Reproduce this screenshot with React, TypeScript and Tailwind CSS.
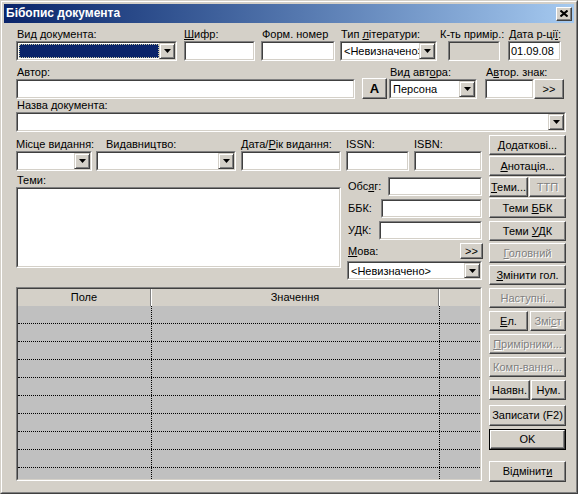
import React from "react";

type Kids = { children?: React.ReactNode; className?: string };

function U({ children }: Kids) {
  return <span className="underline underline-offset-[1px]">{children}</span>;
}

function Label({ children, className = "" }: Kids) {
  return <div className={`h-[13px] whitespace-nowrap ${className}`}>{children}</div>;
}

function Field({
  children,
  className = "",
  disabled,
}: Kids & { disabled?: boolean }) {
  return (
    <div
      className={`border border-t-[#808080] border-l-[#808080] border-r-white border-b-white ${className}`}
    >
      <div
        className={`flex h-full w-full items-center overflow-hidden border border-t-[#404040] border-l-[#404040] border-r-[#d4d0c8] border-b-[#d4d0c8] ${
          disabled ? "bg-[#d4d0c8]" : "bg-white"
        }`}
      >
        {children}
      </div>
    </div>
  );
}

function Arrow() {
  return (
    <div className="flex h-full w-[16px] shrink-0 items-center justify-center border border-t-[#d4d0c8] border-l-[#d4d0c8] border-r-[#404040] border-b-[#404040] bg-[#d4d0c8] shadow-[inset_1px_1px_0_#fff,inset_-1px_-1px_0_#808080]">
      <svg width="7" height="4" viewBox="0 0 7 4">
        <polygon points="0,0 7,0 3.5,4" fill="#000" />
      </svg>
    </div>
  );
}

function Combo({ children, className = "" }: Kids) {
  return (
    <Field className={className}>
      <div className="h-full min-w-0 flex-1 overflow-hidden whitespace-nowrap pl-[2px] leading-[16px]">
        {children}
      </div>
      <Arrow />
    </Field>
  );
}

function Btn({
  children,
  className = "",
  disabled,
  isDefault,
}: Kids & { disabled?: boolean; isDefault?: boolean }) {
  const face = (
    <div
      className={`flex h-full w-full items-center justify-center whitespace-nowrap border border-t-white border-l-white border-r-[#404040] border-b-[#404040] bg-[#d4d0c8] shadow-[inset_-1px_-1px_0_#808080] ${
        disabled ? "text-[#808080] [text-shadow:1px_1px_0_#fff]" : ""
      }`}
    >
      {children}
    </div>
  );
  if (isDefault) {
    return <div className={`border border-black ${className}`}>{face}</div>;
  }
  return <div className={className}>{face}</div>;
}

function TitleBar() {
  return (
    <div className="flex h-[19px] items-center justify-between bg-gradient-to-r from-[#0a246a] to-[#a6caf0] pl-[2px] pr-[2px]">
      <span className="text-[12px] font-bold text-white">Бібопис документа</span>
      <div className="flex h-[14px] w-[16px] items-center justify-center border border-t-white border-l-white border-r-[#404040] border-b-[#404040] bg-[#d4d0c8] shadow-[inset_-1px_-1px_0_#808080]">
        <svg width="8" height="7" viewBox="0 0 8 7">
          <path d="M0.5 0.5 L7.5 6.5 M7.5 0.5 L0.5 6.5" stroke="#000" strokeWidth="2" />
        </svg>
      </div>
    </div>
  );
}

function Grid() {
  const rows = Array.from({ length: 10 });
  return (
    <div className="mt-[7px] h-[194px] w-[466px] border border-t-[#808080] border-l-[#808080] border-r-white border-b-white">
      <div className="flex h-full w-full flex-col overflow-hidden border border-t-[#404040] border-l-[#404040] border-r-[#d4d0c8] border-b-[#d4d0c8] bg-[#c0c0c0]">
        <div className="flex h-[17px] shrink-0 bg-[#d4d0c8]">
          <div className="flex w-[133px] items-center justify-center border-r border-r-[#808080]">
            Поле
          </div>
          <div className="flex w-[288px] items-center justify-center border-l border-l-white border-r border-r-[#808080]">
            Значення
          </div>
          <div className="flex-1 border-l border-l-white" />
        </div>
        {rows.map((_, i) => (
          <div key={i} className="flex h-[18px] shrink-0 border-b border-dotted border-b-black">
            <div className="w-[134px] border-r border-dotted border-r-black" />
            <div className="w-[288px] border-r border-dotted border-r-black" />
            <div className="flex-1" />
          </div>
        ))}
      </div>
    </div>
  );
}

export default function App() {
  return (
    <div className="h-[494px] w-[578px] font-['Liberation_Sans',Arial,sans-serif] text-[11px] leading-[13px] text-black">
      <div className="h-full w-full border border-t-[#d4d0c8] border-l-[#d4d0c8] border-r-[#404040] border-b-[#404040]">
        <div className="flex h-full w-full flex-col border border-t-white border-l-white border-r-[#808080] border-b-[#808080] bg-[#d4d0c8] p-[2px]">
          <TitleBar />

          <div className="flex flex-col pl-[12px]">
            {/* row 1 */}
            <div className="mt-[5px] flex items-end">
              <div className="w-[161px]">
                <Label className="pl-[1px]">Вид документа:</Label>
                <Field className="h-[20px]">
                  <div className="ml-[1px] h-[14px] flex-1 border border-dotted border-[#c8c8a0] bg-[#0a246a]" />
                  <Arrow />
                </Field>
              </div>
              <div className="ml-[7px] w-[71px]">
                <Label>
                  <U>Ш</U>ифр:
                </Label>
                <Field className="h-[20px]" />
              </div>
              <div className="ml-[6px] w-[74px]">
                <Label className="pl-[1px]">Форм. номер</Label>
                <Field className="h-[20px]" />
              </div>
              <div className="ml-[5px] w-[97px]">
                <Label className="pl-[1px]">
                  Тип <U>л</U>ітератури:
                </Label>
                <Combo className="h-[20px]">&lt;Невизначено&gt;</Combo>
              </div>
              <div className="ml-[3px] w-[60px]">
                <Label>К-ть примір.:</Label>
                <Field disabled className="ml-[8px] h-[20px] w-[52px]" />
              </div>
              <div className="ml-[8px] w-[53px]">
                <Label className="pl-[1px]">
                  Дата р-ці<U>ї</U>:
                </Label>
                <Field className="h-[20px]">
                  <span className="pl-[1px]">01.09.08</span>
                </Field>
              </div>
            </div>

            {/* row 2 */}
            <div className="mt-[5px] flex items-end">
              <div className="w-[339px]">
                <Label className="pl-[1px]">Автор:</Label>
                <Field className="h-[20px]" />
              </div>
              <Btn className="ml-[7px] h-[21px] w-[25px]">
                <span className="text-[13px] font-black">A</span>
              </Btn>
              <div className="ml-[2px] w-[88px]">
                <Label className="pl-[1px]">
                  Вид авт<U>о</U>ра:
                </Label>
                <Combo className="h-[20px]">Персона</Combo>
              </div>
              <div className="ml-[8px] w-[79px]">
                <Label className="pl-[1px]">
                  А<U>в</U>тор. знак:
                </Label>
                <div className="flex">
                  <Field className="h-[20px] w-[49px]" />
                  <Btn className="h-[20px] w-[30px]">&gt;&gt;</Btn>
                </div>
              </div>
            </div>

            {/* row 3 */}
            <div className="w-[550px]">
              <Label className="pl-[1px]">Назва документа:</Label>
              <Combo className="h-[20px]" />
            </div>

            {/* lower part */}
            <div className="flex">
              <div className="flex w-[466px] flex-col">
                <div className="mt-[6px] flex items-end">
                  <div className="w-[76px]">
                    <Label>Місце видання:</Label>
                    <Combo className="h-[20px]" />
                  </div>
                  <div className="ml-[4px] w-[140px]">
                    <Label className="pl-[10px]">Видавництво:</Label>
                    <Combo className="h-[20px]" />
                  </div>
                  <div className="ml-[5px] w-[100px]">
                    <Label>
                      Дата/<U>Р</U>ік видання:
                    </Label>
                    <Field className="h-[20px]" />
                  </div>
                  <div className="ml-[5px] w-[63px]">
                    <Label>ISSN:</Label>
                    <Field className="h-[20px]" />
                  </div>
                  <div className="ml-[5px] w-[68px]">
                    <Label>ISBN:</Label>
                    <Field className="h-[20px]" />
                  </div>
                </div>

                <div className="mt-[3px] flex">
                  <div className="w-[325px]">
                    <Label className="pl-[1px]">Теми:</Label>
                    <Field className="h-[81px]" />
                  </div>
                  <div className="ml-[6px] flex w-[135px] flex-col">
                    <div className="mt-[3px] flex items-center">
                      <span className="pl-[1px]">
                        Обс<U>я</U>г:
                      </span>
                      <Field className="ml-auto h-[19px] w-[94px]" />
                    </div>
                    <div className="mt-[3px] flex items-center">
                      <span className="pl-[1px]">ББК:</span>
                      <Field className="ml-auto h-[19px] w-[101px]" />
                    </div>
                    <div className="mt-[3px] flex items-center">
                      <span className="pl-[1px]">УДК:</span>
                      <Field className="ml-auto h-[19px] w-[103px]" />
                    </div>
                    <div className="mt-[3px] flex items-center">
                      <span className="pl-[1px]">
                        <U>М</U>ова:
                      </span>
                      <Btn className="ml-auto mr-[-1px] h-[16px] w-[23px]">&gt;&gt;</Btn>
                    </div>
                    <Combo className="mt-[2px] h-[19px]">&lt;Невизначено&gt;</Combo>
                  </div>
                </div>

                <Grid />
              </div>

              {/* buttons */}
              <div className="ml-[7px] flex w-[77px] flex-col">
                <Btn className="mt-[3px] h-[20px]">
                  <span>
                    <U>Д</U>одаткові...
                  </span>
                </Btn>
                <Btn className="mt-[1px] h-[20px]">
                  <span>
                    <U>А</U>нотація...
                  </span>
                </Btn>
                <div className="mt-[1px] flex h-[20px] justify-between">
                  <Btn className="h-full w-[39px]">
                    <span>
                      <U>Т</U>еми...
                    </span>
                  </Btn>
                  <Btn disabled className="h-full w-[37px]">
                    ТТП
                  </Btn>
                </div>
                <Btn className="mt-[1px] h-[20px]">
                  <span>
                    Теми <U>Б</U>БК
                  </span>
                </Btn>
                <Btn className="mt-[3px] h-[20px]">
                  <span>
                    Теми <U>У</U>ДК
                  </span>
                </Btn>
                <Btn disabled className="mt-[2px] h-[20px]">
                  <span>
                    <U>Г</U>оловний
                  </span>
                </Btn>
                <Btn className="mt-[2px] h-[20px]">
                  <span>
                    <U>З</U>мінити гол.
                  </span>
                </Btn>
                <Btn disabled className="mt-[3px] h-[20px]">
                  Наступні...
                </Btn>
                <div className="mt-[3px] flex h-[20px] justify-between">
                  <Btn className="h-full w-[39px]">
                    <span>
                      <U>Е</U>л.
                    </span>
                  </Btn>
                  <Btn disabled className="h-full w-[36px]">
                    <span>
                      Змі<U>с</U>т
                    </span>
                  </Btn>
                </div>
                <Btn disabled className="mt-[3px] h-[20px]">
                  <span>
                    <U>П</U>римірники...
                  </span>
                </Btn>
                <Btn disabled className="mt-[3px] h-[20px]">
                  Комп-вання...
                </Btn>
                <div className="mt-[3px] flex h-[20px] justify-between">
                  <Btn className="h-full w-[41px]">Наявн.</Btn>
                  <Btn className="h-full w-[35px]">Нум.</Btn>
                </div>
                <Btn className="mt-[5px] h-[21px]">Записати (F2)</Btn>
                <Btn isDefault className="mt-[3px] h-[21px]">
                  OK
                </Btn>
                <Btn className="mt-[11px] h-[21px]">
                  <span>
                    Відмінит<U>и</U>
                  </span>
                </Btn>
              </div>
            </div>
          </div>
        </div>
      </div>
    </div>
  );
}
